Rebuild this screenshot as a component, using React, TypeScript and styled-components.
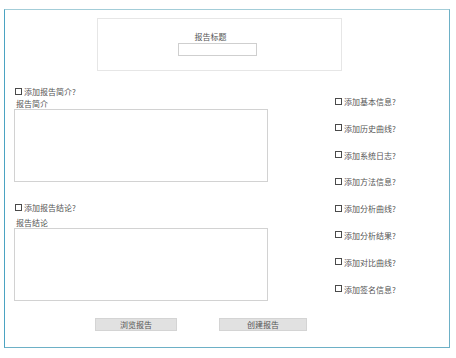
import React, { useState } from "react";
import styled, { createGlobalStyle } from "styled-components";

const GlobalStyle = createGlobalStyle`
    html, body {
        margin: 0;
        padding: 0;
        background: #fff;
    }
    body {
        font-family: "Noto Sans CJK SC", "Noto Sans", sans-serif;
        color: #555;
    }
`;

const leftOptions = [
    { key: "intro", check: "添加报告简介?", label: "报告简介" },
    { key: "summary", check: "添加报告结论?", label: "报告结论" },
];

const rightOptions = [
    "添加基本信息?",
    "添加历史曲线?",
    "添加系统日志?",
    "添加方法信息?",
    "添加分析曲线?",
    "添加分析结果?",
    "添加对比曲线?",
    "添加签名信息?",
];

export default function App() {
    const [checked, setChecked] = useState<Record<string, boolean>>({});
    const toggle = (k: string) => setChecked((c) => ({ ...c, [k]: !c[k] }));

    return (
        <>
            <GlobalStyle />
            <Frame>
                <TitleBox>
                    <TitleLabel>报告标题</TitleLabel>
                    <TitleInput type='text' />
                </TitleBox>

                <Body>
                    <LeftColumn>
                        {leftOptions.map((o, i) => (
                            <Group key={o.key} $first={i === 0}>
                                <CheckRow>
                                    <Box
                                        type='checkbox'
                                        checked={!!checked[o.key]}
                                        onChange={() => toggle(o.key)}
                                    />
                                    {o.check}
                                </CheckRow>
                                <FieldLabel $first={i === 0}>{o.label}</FieldLabel>
                                <Area />
                            </Group>
                        ))}
                    </LeftColumn>

                    <RightColumn>
                        {rightOptions.map((t) => (
                            <OptionRow key={t}>
                                <Box
                                    type='checkbox'
                                    checked={!!checked[t]}
                                    onChange={() => toggle(t)}
                                />
                                {t}
                            </OptionRow>
                        ))}
                    </RightColumn>
                </Body>

                <Actions>
                    <ActionButton $width={82}>浏览报告</ActionButton>
                    <ActionButton $width={88}>创建报告</ActionButton>
                </Actions>
            </Frame>
        </>
    );
}

const Frame = styled.div`
    box-sizing: border-box;
    margin: 9px 0 0 4px;
    width: 446px;
    height: 339px;
    border: 1px solid #6db0c6;
    border-top-color: #a3cdd8;
    border-left-color: #4ba3c2;
    display: flex;
    flex-direction: column;
`;

const TitleBox = styled.div`
    box-sizing: border-box;
    margin: 8px 0 0 92px;
    width: 245px;
    height: 53px;
    border: 1px solid #e6e6e6;
    display: flex;
    flex-direction: column;
    align-items: center;
    padding-top: 13px;
`;

const TitleLabel = styled.div`
    font-size: 8px;
    line-height: 10px;
    color: #555;
    margin-right: 18px;
`;

const TitleInput = styled.input`
    box-sizing: border-box;
    width: 79px;
    height: 13px;
    margin: 1px 4px 0 0;
    padding: 0;
    border: 1px solid #cfcfcf;
    outline: none;
`;

const Body = styled.div`
    display: flex;
    margin-top: 16px;
`;

const LeftColumn = styled.div`
    display: flex;
    flex-direction: column;
    margin-left: 9px;
    width: 254px;
`;

const Group = styled.div<{ $first: boolean }>`
    display: flex;
    flex-direction: column;
    margin-top: ${(p) => (p.$first ? "0" : "21px")};
`;

const CheckRow = styled.label`
    display: flex;
    align-items: center;
    height: 10px;
    font-size: 8px;
    line-height: 10px;
    color: #555;
    padding-left: 1px;
`;

const Box = styled.input`
    appearance: none;
    box-sizing: border-box;
    width: 7px;
    height: 7px;
    margin: 0 2px 2px 0;
    border: 1px solid #4a4a4a;
    background: #fff;
    &:checked {
        background: #555;
    }
`;

const FieldLabel = styled.div<{ $first: boolean }>`
    font-size: 8px;
    line-height: 10px;
    margin: ${(p) => (p.$first ? "2px" : "5px")} 0 0 2px;
    color: #555;
`;

const Area = styled.textarea`
    box-sizing: border-box;
    width: 254px;
    height: 73px;
    margin: 0;
    border: 1px solid #d2d2d2;
    resize: none;
    outline: none;
`;

const RightColumn = styled.div`
    display: flex;
    flex-direction: column;
    gap: 16.8px;
    margin-left: 67px;
    padding-top: 10px;
`;

const OptionRow = styled(CheckRow)`
    padding-left: 0;
`;

const Actions = styled.div`
    display: flex;
    gap: 42px;
    margin: 17px 0 0 90px;
`;

const ActionButton = styled.button<{ $width: number }>`
    box-sizing: border-box;
    width: ${(p) => p.$width}px;
    height: 13px;
    padding: 0;
    border: 1px solid #d4d4d4;
    background: #e1e1e1;
    font-family: "Noto Sans CJK SC", sans-serif;
    font-size: 8px;
    line-height: 11px;
    color: #555;
`;
